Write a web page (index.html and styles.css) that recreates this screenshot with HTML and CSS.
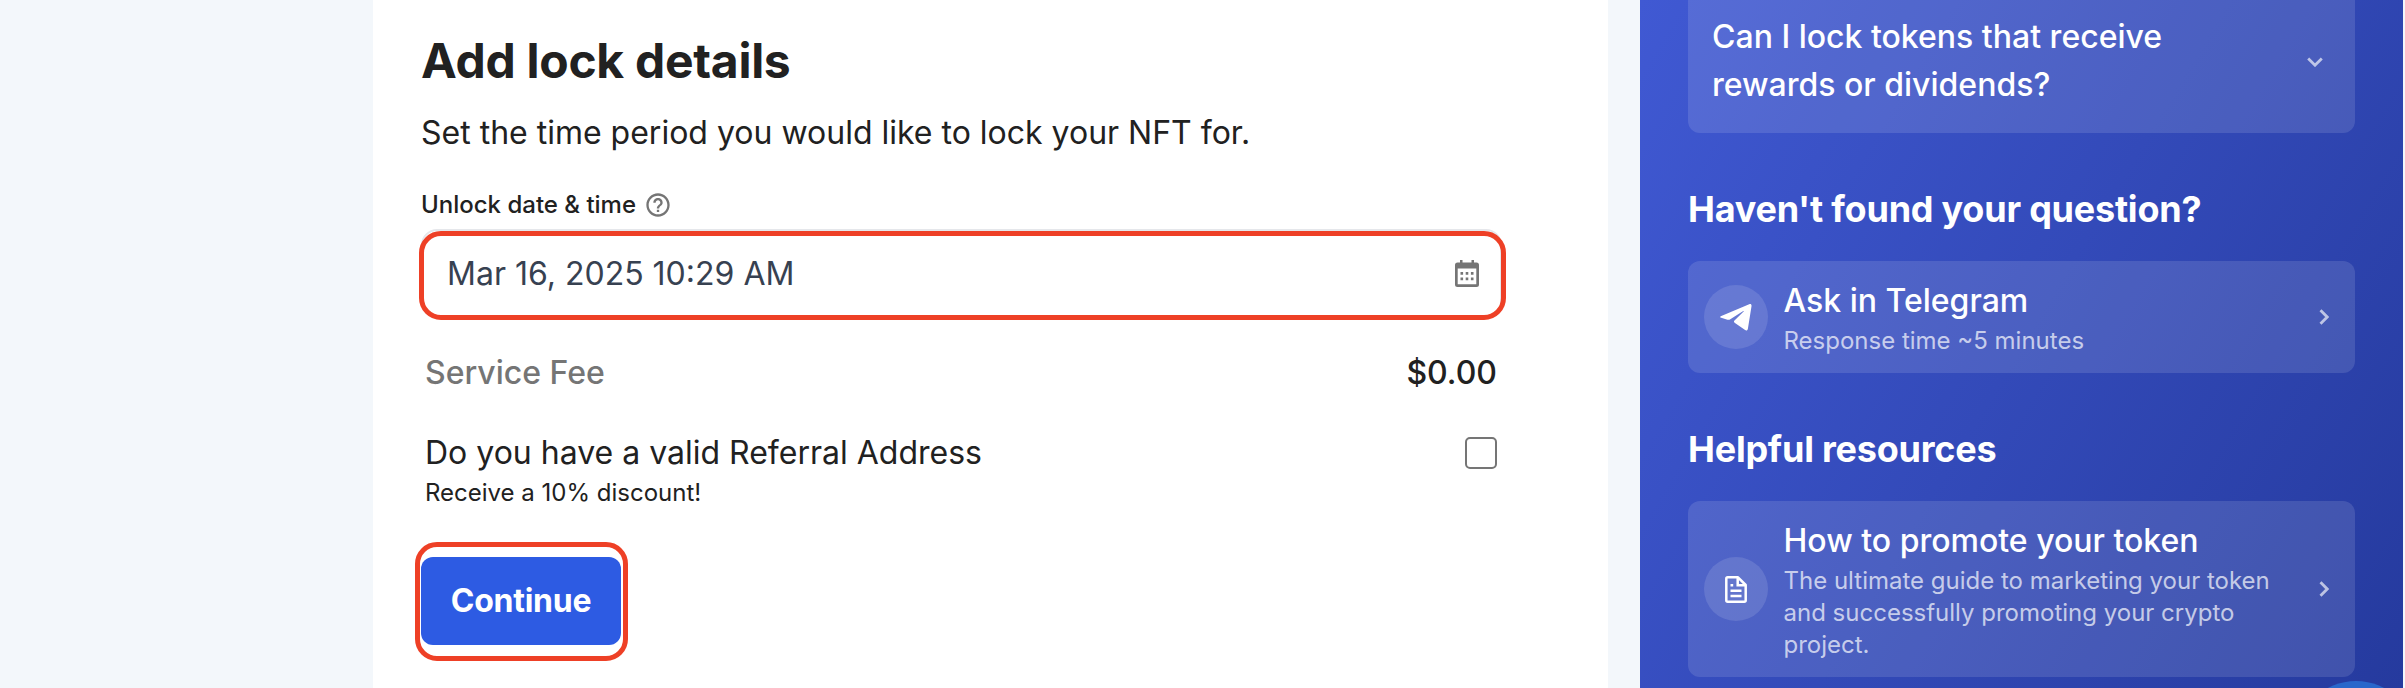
FILE: index.html
```html
<!DOCTYPE html>
<html lang="en">
<head>
<meta charset="utf-8">
<title>Add lock details</title>
<link rel="stylesheet" href="styles.css">
</head>
<body>
<div class="page">
  <main class="form">
    <h1 class="title"><span>Add lock details</span></h1>
    <p class="intro"><span>Set the time period you would like to lock your NFT for.</span></p>
    <div class="label">
      <span>Unlock date &amp; time</span>
      <svg class="help" viewBox="0 0 24 24"><path fill="#757575" d="M11 18h2v-2h-2v2zm1-16C6.480 2 2 6.480 2 12s4.480 10 10 10 10-4.480 10-10S17.520 2 12 2zm0 18c-4.410 0-8-3.590-8-8s3.590-8 8-8 8 3.590 8 8-3.590 8-8 8zm0-14c-2.210 0-4 1.790-4 4h2c0-1.100.9-2 2-2s2 .9 2 2c0 2-3 1.750-3 5h2c0-2.250 3-2.500 3-5 0-2.210-1.790-4-4-4z"/></svg>
    </div>
    <div class="field">
      <span>Mar 16, 2025 10:29 AM</span>
      <svg class="calendar" viewBox="0 0 24 27"><path fill="#757575" fill-rule="evenodd" d="M5 0h2.500v2.500h9V0H19v2.500h2.500A2.500 2.500 0 0 1 24 5v19.500a2.500 2.500 0 0 1-2.500 2.500h-19A2.500 2.500 0 0 1 0 24.500V5a2.500 2.500 0 0 1 2.500-2.500H5zM2.700 8.500v15.800h18.600V8.500z"/><path fill="#757575" d="M5.500 12h2.600v2.700H5.500zM10.700 12h2.600v2.700h-2.600zM15.900 12h2.600v2.700h-2.600zM5.500 17.500h2.600v2.700H5.500zM10.700 17.500h2.600v2.700h-2.600zM15.900 17.500h2.600v2.700h-2.600z"/></svg>
    </div>
    <div class="fee"><span>Service Fee</span><span class="amount">$0.00</span></div>
    <div class="referral">
      <div>
        <div class="question">Do you have a valid Referral Address</div>
        <div class="hint">Receive a 10% discount!</div>
      </div>
      <div class="checkbox"></div>
    </div>
    <div class="action"><button class="continue">Continue</button></div>
  </main>
  <aside class="side">
    <section class="card faq">
      <div class="card-title">Can I lock tokens that receive<br>rewards or dividends?</div>
      <svg class="down" viewBox="0 0 16 10"><path d="M1.200 1.500 8 8.200l6.800-6.700"/></svg>
    </section>
    <h2>Haven't found your question?</h2>
    <section class="card telegram">
      <div class="badge"><svg class="plane" viewBox="0 0 32 27"><path fill="#fff" d="M1.300 12 29.200.3c1.500-.6 2.500.2 2.300 1.900l-3.600 22.600c-.3 1.700-1.600 2.200-2.800 1.300L14.600 18.700c-.9-.7-.9-1.400-.1-2.200L23.600 7.600c.5-.6 0-.9-.7-.4L10.300 15.300c-.9.6-1.800.7-2.800.4L1.200 13.800c-1.500-.4-1.400-1.200.1-1.800z"/></svg></div>
      <div class="copy">
        <div class="card-title">Ask in Telegram</div>
        <div class="card-text">Response time ~5 minutes</div>
      </div>
      <svg class="right" viewBox="0 0 10 16"><path d="M1.500 1.200 8.200 8l-6.700 6.800"/></svg>
    </section>
    <h2>Helpful resources</h2>
    <section class="card resource">
      <div class="badge"><svg class="doc" viewBox="0 0 22 27"><path fill="none" stroke="#fff" stroke-width="2.500" stroke-linejoin="round" d="M2.700 1.300H13l7.700 7.700v15.200q0 1.500-1.500 1.500H2.700q-1.400 0-1.400-1.500V2.800q0-1.500 1.400-1.500z"/><path fill="none" stroke="#fff" stroke-width="2.500" d="M12.700 1.500v7.700h8M5.500 14.700h11M5.500 20h11"/><path fill="#fff" d="M5.500 8h2.700v2.500H5.500z"/></svg></div>
      <div class="copy">
        <div class="card-title">How to promote your token</div>
        <div class="card-text">The ultimate guide to marketing your token and successfully promoting your crypto project.</div>
      </div>
      <svg class="right" viewBox="0 0 10 16"><path d="M1.500 1.200 8.200 8l-6.700 6.800"/></svg>
    </section>
    <div class="chat"></div>
  </aside>
</div>
</body>
</html>
```

FILE: styles.css
```css
* { box-sizing: border-box; }
body { margin: 0; font-family: Inter, "Liberation Sans", sans-serif; color: #212121; background: #f3f7fb; }
svg { display: block; flex: none; }
.page { display: flex; width: 2405px; height: 688px; padding-left: 373px; overflow: hidden; }
.form { width: 1235px; height: 688px; padding: 32px 104px 0 48px; background: #fff; margin-right: 32px; flex: none; }
.title { margin: 0; font-size: 48px; line-height: 58px; font-weight: 700; letter-spacing: -0.28px; white-space: nowrap; }
.intro { margin: 19px 0 0; font-size: 32px; line-height: 48px; white-space: nowrap; }
.label { display: flex; align-items: center; gap: 8px; margin-top: 29px; height: 36px; font-size: 24px; font-weight: 500; }
.help { width: 28px; height: 28px; margin-top: 1px; }
.field { position: relative; display: flex; align-items: center; justify-content: space-between; height: 89px; margin: 7px 2px 0 0; padding: 0 21px 1px 24px; border: 2px solid #e5e7eb; border-radius: 16px; font-size: 32px; color: #374151; }
.field::after { content: ""; position: absolute; inset: 0 -6px -4px -4px; border: 5px solid #ee4026; border-radius: 22px; }
.calendar { width: 24px; height: 27px; }
.fee { display: flex; justify-content: space-between; margin: 31px 7px 0 4px; font-size: 32px; line-height: 48px; font-weight: 500; color: #757575; }
.amount { color: #212121; }
.referral { display: flex; justify-content: space-between; align-items: flex-start; margin: 32px 7px 0 4px; }
.question { font-size: 32px; line-height: 48px; }
.hint { font-size: 24px; line-height: 32px; }
.checkbox { width: 32px; height: 32px; margin-top: 8px; border: 2px solid #757575; border-radius: 5px; }
.action { width: 213px; height: 119px; margin: 33px 0 0 -6px; padding: 10px 2px 10px 1px; border: 5px solid #ee4026; border-radius: 22px; }
.continue { display: block; width: 100%; height: 88px; padding: 0 0 2px; border: 0; border-radius: 12px; background: #2d5be3; color: #fff; font: 700 32px Inter, sans-serif; letter-spacing: -0.25px; }
.side { position: relative; width: 763px; height: 688px; padding: 0 48px; flex: none; color: #fff; background: linear-gradient(121deg, #4059d3 0%, #334ab9 50%, #253a9e 100%); }
.card { display: flex; align-items: center; background: rgba(255,255,255,.12); border-radius: 12px; padding: 0 26px 0 16px; }
.card-title { font-size: 32px; line-height: 48px; font-weight: 500; white-space: nowrap; }
.faq { height: 133px; padding: 0 32px 12px 24px; justify-content: space-between; border-radius: 0 0 12px 12px; }
h2 { margin: 48px 0 24px; font-size: 36px; line-height: 56px; font-weight: 700; letter-spacing: -0.23px; white-space: nowrap; }
.badge { display: flex; align-items: center; justify-content: center; width: 64px; height: 64px; border-radius: 50%; background: rgba(255,255,255,.12); flex: none; }
.plane { width: 32px; height: 27px; }
.doc { width: 22px; height: 27px; }
.copy { width: 500px; margin-left: 15.5px; margin-right: auto; }
.card-text { font-size: 24px; line-height: 32px; color: rgba(255,255,255,.7); }
.telegram { height: 112px; }
.resource { height: 176px; }
.down { width: 16px; height: 10px; margin-top: 3px; }
.right { width: 10px; height: 16px; }
.down path, .right path { fill: none; stroke: rgba(255,255,255,.65); stroke-width: 2.800; }
.chat { position: absolute; left: 656px; top: 681px; width: 120px; height: 120px; border-radius: 50%; background: #2967cb; }
```
